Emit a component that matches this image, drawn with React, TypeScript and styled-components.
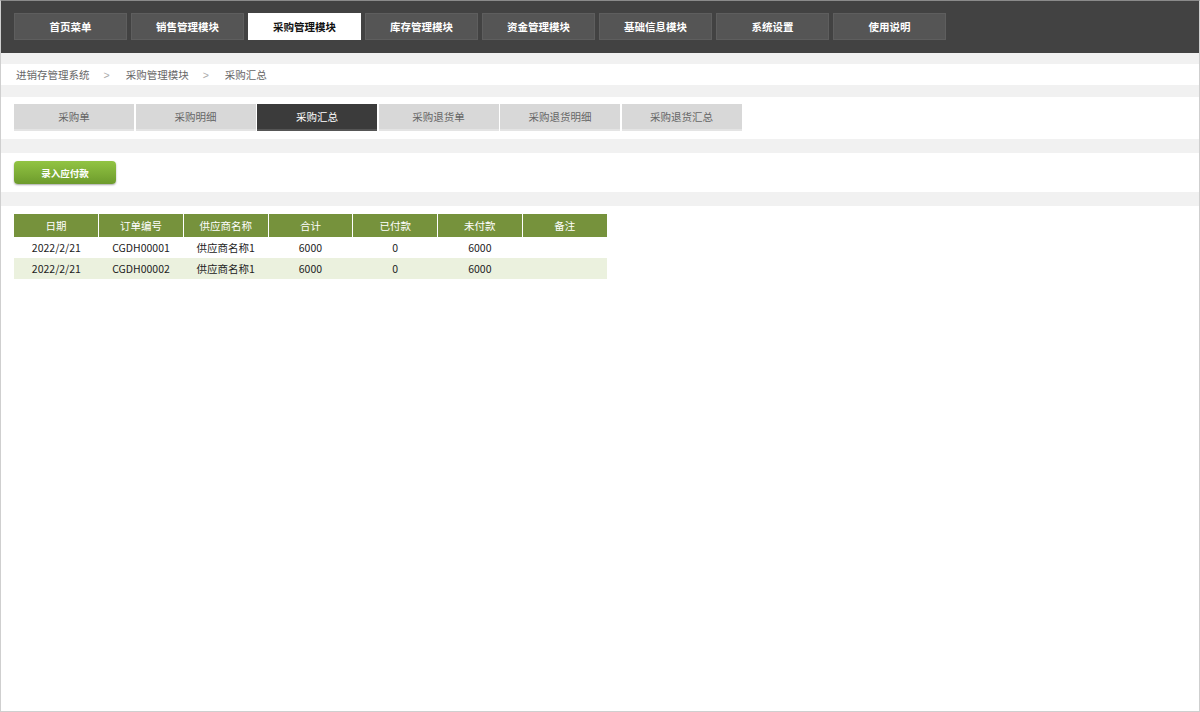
import styled, { createGlobalStyle } from "styled-components";

const GlobalStyle = createGlobalStyle`
  html, body {
    margin: 0;
    padding: 0;
    background: #fff;
  }
  body {
    font-family: "Noto Sans CJK SC", "Liberation Sans", sans-serif;
  }
`;

const menus = [
  "首页菜单",
  "销售管理模块",
  "采购管理模块",
  "库存管理模块",
  "资金管理模块",
  "基础信息模块",
  "系统设置",
  "使用说明",
];

const tabs = ["采购单", "采购明细", "采购汇总", "采购退货单", "采购退货明细", "采购退货汇总"];

const columns = ["日期", "订单编号", "供应商名称", "合计", "已付款", "未付款", "备注"];

const rows = [
  ["2022/2/21", "CGDH00001", "供应商名称1", "6000", "0", "6000", ""],
  ["2022/2/21", "CGDH00002", "供应商名称1", "6000", "0", "6000", ""],
];

const App = () => {
  return (
    <>
      <GlobalStyle />
      <Frame>
        <TopNav>
          {menus.map((m) => (
            <NavItem key={m} $active={m === "采购管理模块"}>
              {m}
            </NavItem>
          ))}
        </TopNav>
        <Band $h={11} />
        <Crumbs>
          <span>进销存管理系统</span>
          <Sep>&gt;</Sep>
          <span>采购管理模块</span>
          <Sep>&gt;</Sep>
          <span>采购汇总</span>
        </Crumbs>
        <Band $h={12} />
        <TabRow>
          {tabs.map((t) => (
            <Tab key={t} $active={t === "采购汇总"}>
              {t}
            </Tab>
          ))}
        </TabRow>
        <Band $h={14} />
        <Toolbar>
          <GreenButton>录入应付款</GreenButton>
        </Toolbar>
        <Band $h={14} />
        <TableArea>
          <Table>
            <thead>
              <tr>
                {columns.map((c) => (
                  <Th key={c}>{c}</Th>
                ))}
              </tr>
            </thead>
            <tbody>
              {rows.map((r, i) => (
                <Tr key={i} $odd={i % 2 === 1}>
                  {r.map((v, j) => (
                    <Td key={j}>{v}</Td>
                  ))}
                </Tr>
              ))}
            </tbody>
          </Table>
        </TableArea>
      </Frame>
    </>
  );
};
export default App;

const Frame = styled.div`
  height: 712px;
  box-sizing: border-box;
  border: 1px solid #cfcfcf;
  border-top-color: #8a8a8a;
  display: flex;
  flex-direction: column;
  background: #fff;
`;

const TopNav = styled.div`
  background: #424242;
  padding: 12px 13px 13px;
  display: flex;
  gap: 4px;
`;

const NavItem = styled.div<{ $active?: boolean }>`
  width: 111px;
  height: 25px;
  border: 1px solid ${({ $active }) => ($active ? "#fff" : "#5e5e5e")};
  background: ${({ $active }) => ($active ? "#fff" : "#555555")};
  color: ${({ $active }) => ($active ? "#111" : "#fff")};
  font-size: 10.5px;
  font-weight: bold;
  display: flex;
  align-items: center;
  justify-content: center;
`;

const Band = styled.div<{ $h: number }>`
  height: ${({ $h }) => $h}px;
  background: #f1f1f1;
  flex-shrink: 0;
`;

const Crumbs = styled.div`
  height: 21px;
  padding-left: 15px;
  display: flex;
  align-items: center;
  font-size: 10.5px;
  color: #666;
`;

const Sep = styled.span`
  color: #aaa;
  margin: 0 16px 0 14px;
  font-family: "Liberation Sans", sans-serif;
`;

const TabRow = styled.div`
  padding: 7px 13px 8px;
  display: flex;
  gap: 1.5px;
`;

const Tab = styled.div<{ $active?: boolean }>`
  width: 120px;
  height: 25px;
  background: ${({ $active }) => ($active ? "#3b3b3b" : "#d8d8d8")};
  border-bottom: 2px solid ${({ $active }) => ($active ? "#555" : "#e4e4e4")};
  color: ${({ $active }) => ($active ? "#fff" : "#666")};
  font-size: 10.5px;
  display: flex;
  align-items: center;
  justify-content: center;
`;

const Toolbar = styled.div`
  padding: 8px 13px;
  display: flex;
`;

const GreenButton = styled.button`
  width: 102px;
  height: 23px;
  border: none;
  border-radius: 4px;
  background: linear-gradient(#92c443, #6d9b2c);
  box-shadow: 0 1px 2px rgba(0, 0, 0, 0.35);
  color: #fff;
  font-family: inherit;
  font-size: 9.5px;
  font-weight: bold;
  padding: 0;
`;

const TableArea = styled.div`
  padding: 8px 13px;
`;

const Table = styled.table`
  border-collapse: collapse;
  width: 593px;
  table-layout: fixed;
`;

const Th = styled.th`
  background: #76923c;
  color: #fff;
  font-size: 10.5px;
  font-weight: normal;
  height: 23px;
  padding: 0;
  border-left: 1px solid #fff;
  &:first-child {
    border-left: none;
  }
`;

const Tr = styled.tr<{ $odd?: boolean }>`
  background: ${({ $odd }) => ($odd ? "#ebf1de" : "#fff")};
`;

const Td = styled.td`
  height: 21px;
  padding: 0;
  text-align: center;
  font-size: 10.5px;
  color: #222;
`;
